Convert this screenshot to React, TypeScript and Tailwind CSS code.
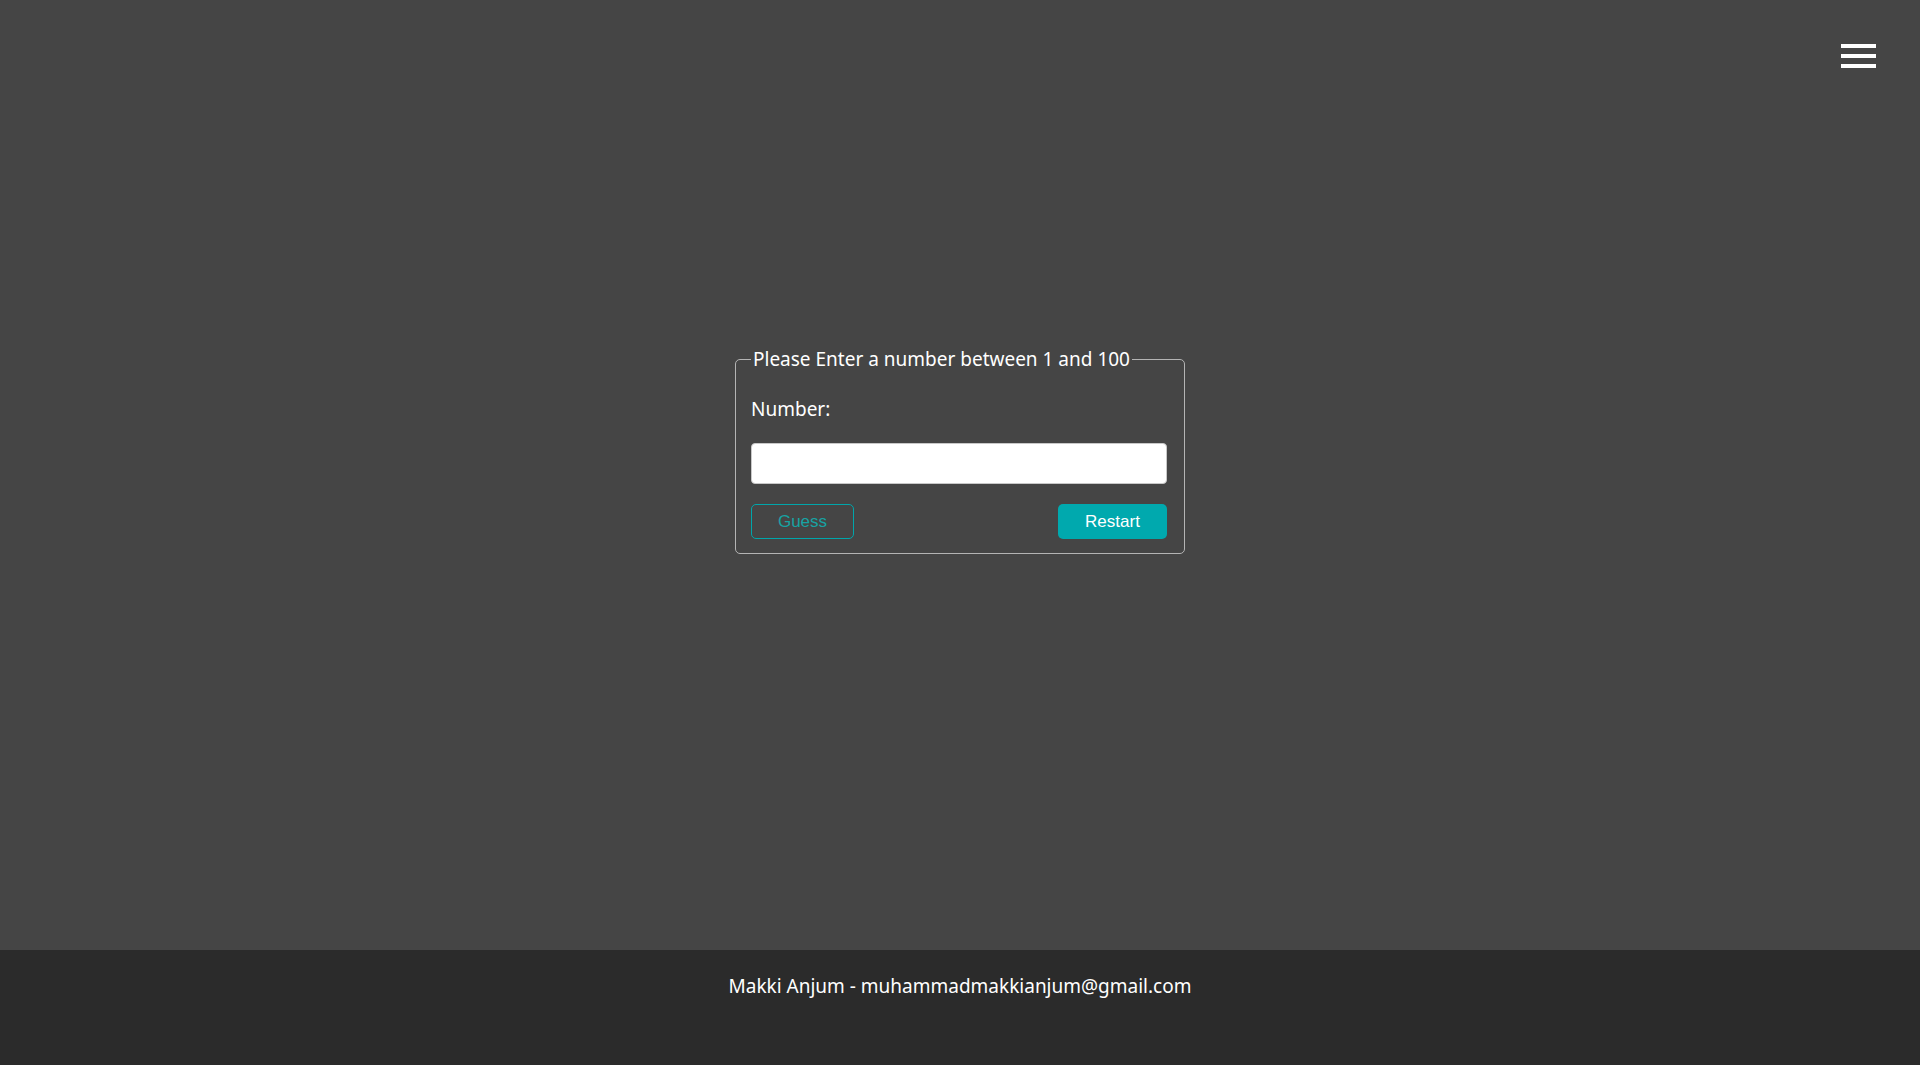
export default function App() {
  return (
    <div className="min-h-screen flex flex-col bg-[#454545] font-['Noto_Sans',sans-serif] text-white">
      {/* Top bar with menu toggle */}
      <header className="flex justify-end pt-[44px] pr-[44px]">
        <button className="flex flex-col gap-[6px]" aria-label="Menu">
          <span className="block w-[35px] h-[4px] bg-white" />
          <span className="block w-[35px] h-[4px] bg-white" />
          <span className="block w-[35px] h-[4px] bg-white" />
        </button>
      </header>

      {/* Game */}
      <main className="h-[882px] flex justify-center">
        <fieldset className="mt-[278px] self-start w-[450px] border-[1.5px] border-[#b4b4b4] rounded-[5px] px-[15px] pb-[14px]">
          <legend className="px-[2px] text-[19px] leading-[26px]">Please Enter a number between 1 and 100</legend>
          <label className="block mt-[25px] text-[19px] leading-[24px]">Number:</label>
          <input
            type="text"
            className="mt-[22px] block w-[416px] h-[41px] bg-white rounded-[4px] border border-[#c8c8c8] text-black px-2"
          />
          <div className="mt-[20px] w-[416px] flex justify-between font-['Liberation_Sans',Arial,sans-serif] text-[17px]">
            <button className="w-[103px] h-[35px] rounded-[5px] border border-[#00a6ab] text-[#17a3a3]">Guess</button>
            <button className="w-[109px] h-[35px] rounded-[5px] bg-[#00a9ae] text-white">Restart</button>
          </div>
        </fieldset>
      </main>

      <footer className="h-[115px] bg-[#2b2b2b] flex justify-center pt-[24px]">
        <p className="text-[19px] leading-[24px]">Makki Anjum - muhammadmakkianjum@gmail.com</p>
      </footer>
    </div>
  );
}
